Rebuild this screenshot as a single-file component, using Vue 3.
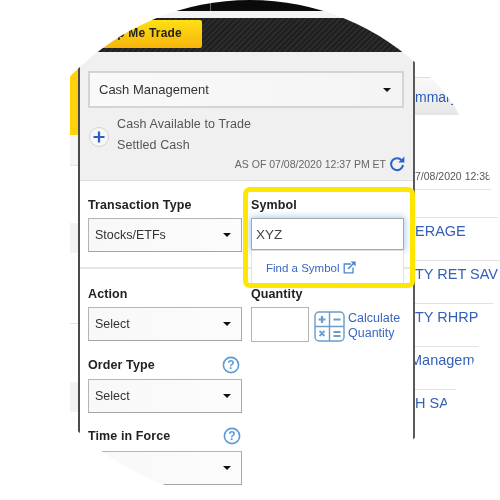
<script setup>
const leftRows = [
  { id: 1, cls: 'yellow' },
  { id: 2, cls: 'pale' },
  { id: 3, cls: 'band-a' },
  { id: 4, cls: 'rule' },
  { id: 5, cls: 'band-b' }
]

const accounts = [
  { id: 1, text: 'ERAGE', cls: 'row-a', width: '85px' },
  { id: 2, text: 'TY RET SAV', cls: 'row-b', width: '85px' },
  { id: 3, text: 'TY RHRP', cls: 'row-c', width: '78px' },
  { id: 4, text: 'Managem', cls: 'row-d', width: '64px' },
  { id: 5, text: 'H SA', cls: 'row-e', width: '41px' }
]
</script>

<template>
  <div class="stage">
    <header class="topbar">
      <div class="black"><span class="tick"></span></div>
      <div class="tabbar">
        <div class="tab">Help Me Trade</div>
      </div>
    </header>

    <div class="body">
      <aside class="left">
        <div v-for="row in leftRows" :key="row.id" :class="row.cls"></div>
      </aside>

      <main class="panel">
        <section class="cash">
          <div class="select cash-select">
            <span>Cash Management</span>
            <i class="caret"></i>
          </div>
          <div class="balances">
            <span class="plus">
              <svg width="14" height="14" viewBox="0 0 14 14">
                <path d="M7 1.5v11M1.5 7h11" stroke="#2a5fc4" stroke-width="2.2" fill="none" />
              </svg>
            </span>
            <div class="balance-text">
              <div>Cash Available to Trade</div>
              <div>Settled Cash</div>
            </div>
          </div>
          <div class="asof">
            <span>AS OF 07/08/2020 12:37 PM ET</span>
            <svg width="16" height="17" viewBox="0 0 16 17">
              <path d="M12.6 5.2A6 6 0 1 0 14 10" stroke="#2a62c8" stroke-width="2" fill="none" />
              <path d="M15.4 1.4v6h-6z" fill="#2a62c8" />
            </svg>
          </div>
        </section>

        <section class="form-row first">
          <div class="col">
            <label>Transaction Type</label>
            <div class="select">
              <span>Stocks/ETFs</span>
              <i class="caret"></i>
            </div>
          </div>
          <div class="col symbol">
            <label>Symbol</label>
            <div class="symbol-input">XYZ</div>
            <div class="symbol-menu">
              <a>Find a Symbol</a>
              <svg width="13" height="13" viewBox="0 0 13 13">
                <path d="M8 3H1.2v8.8H10V6.500" stroke="#4a86c8" stroke-width="1.3" fill="none" />
                <path d="M5 8l6-6" stroke="#4a86c8" stroke-width="1.5" fill="none" />
                <path d="M7.600 .6h5v5z" fill="#4a86c8" />
              </svg>
            </div>
          </div>
        </section>

        <section class="form-row second">
          <div class="col">
            <label>Action</label>
            <div class="select">
              <span>Select</span>
              <i class="caret"></i>
            </div>
            <label class="with-help">
              Order Type
              <svg class="help" width="18" height="18" viewBox="0 0 18 18">
                <circle cx="9" cy="9" r="7.600" stroke="#5c9bd6" stroke-width="1.6" fill="#fff" />
                <text x="9" y="13" text-anchor="middle" class="help-mark">?</text>
              </svg>
            </label>
            <div class="select">
              <span>Select</span>
              <i class="caret"></i>
            </div>
            <label class="with-help tif">
              Time in Force
              <svg class="help" width="18" height="18" viewBox="0 0 18 18">
                <circle cx="9" cy="9" r="7.600" stroke="#5c9bd6" stroke-width="1.6" fill="#fff" />
                <text x="9" y="13" text-anchor="middle" class="help-mark">?</text>
              </svg>
            </label>
            <div class="select">
              <span></span>
              <i class="caret"></i>
            </div>
          </div>
          <div class="col">
            <label>Quantity</label>
            <div class="qty">
              <div class="qty-input"></div>
              <svg width="31" height="31" viewBox="0 0 31 31">
                <rect x="1" y="1" width="29" height="29" rx="4" stroke="#6c9cc8" stroke-width="1.4" fill="#fff" />
                <path d="M15.500 1v29M1 15.500h29" stroke="#6c9cc8" stroke-width="1.4" />
                <path d="M8 5v7M4.500 8.500h7M19.500 8.500h7" stroke="#6c9cc8" stroke-width="2.200" />
                <path d="M5.500 20l5 5M10.500 20l-5 5M19.500 21h7M19.500 25h7" stroke="#6c9cc8" stroke-width="1.800" />
              </svg>
              <a class="calc">Calculate<br />Quantity</a>
            </div>
          </div>
        </section>
      </main>

      <aside class="right">
        <div class="summary-tab"><span>mmary</span></div>
        <div class="date">7/08/2020 12:38</div>
        <div
          v-for="item in accounts"
          :key="item.id"
          class="account"
          :class="item.cls"
          :style="{ width: item.width }"
        >
          <span>{{ item.text }}</span>
        </div>
      </aside>
    </div>

    <div class="highlight"></div>
  </div>
</template>

<style scoped>
.stage {
  position: relative;
  width: 500px;
  height: 500px;
  overflow: hidden;
  background: #fff;
  clip-path: circle(250px at 250px 250px);
  font-family: "Liberation Sans", Arial, sans-serif;
  color: #333;
  filter: blur(0.35px);
}

/* top of the page */
.topbar {
  height: 52px;
  background: #f4f4f4;
}

.black {
  position: relative;
  height: 11px;
  background: #0b0b0b;
}

.tick {
  position: absolute;
  left: 210px;
  top: 0;
  width: 1px;
  height: 11px;
  background: #666;
}

.tabbar {
  height: 34px;
  margin-top: 7px;
  padding-top: 2px;
  box-sizing: border-box;
  background: repeating-linear-gradient(135deg, #2b2b2b 0 2px, #1f1f1f 2px 4px);
}

.tab {
  width: 202px;
  height: 28px;
  box-sizing: border-box;
  padding-left: 98px;
  border-radius: 0 2px 2px 0;
  background: linear-gradient(#ffe014, #f6b40c);
  color: #222;
  font-size: 12px;
  font-weight: 700;
  line-height: 26px;
  letter-spacing: 0.2px;
}

.body {
  display: flex;
  height: 448px;
}

/* strip left of the panel */
.left {
  width: 8px;
  margin-left: 70px;
  flex: none;
}

.yellow {
  height: 83px;
  background: #ffd20a;
}

.pale {
  height: 30px;
  background: #f5f5f5;
  border-bottom: 1px solid #e4e4e4;
}

.band-a {
  height: 30px;
  margin-top: 57px;
  background: #f3f3f3;
}

.rule {
  height: 1px;
  margin-top: 70px;
  background: #e4e4e4;
}

.band-b {
  height: 30px;
  margin-top: 58px;
  background: #f3f3f3;
}

/* order panel */
.panel {
  width: 337px;
  flex: none;
  box-sizing: border-box;
  border-left: 2px solid #4a4a4a;
  border-right: 2px solid #5a5a5a;
  background: #fff;
}

.cash {
  height: 129px;
  box-sizing: border-box;
  padding: 19px 9px 0 8px;
  background: #f0f0f0;
  border-bottom: 1px solid #dedede;
}

.select {
  display: flex;
  align-items: center;
  justify-content: space-between;
  height: 34px;
  box-sizing: border-box;
  padding: 0 10px 0 6px;
  border: 1px solid #aaa;
  border-color: #b4b4b4 #aaa #a4a4a4 #b4b4b4;
  background: linear-gradient(90deg, #f8f8f8, #fcfcfc);
  font-size: 12.5px;
  color: #333;
}

.cash-select {
  height: 37px;
  padding-left: 9px;
  padding-right: 11px;
  border: 2px solid #d4d4d4;
  background: linear-gradient(90deg, #f9f9f9, #f4f4f4);
  font-size: 13px;
}

.caret {
  width: 0;
  height: 0;
  border-left: 4px solid transparent;
  border-right: 4px solid transparent;
  border-top: 4px solid #111;
}

.balances {
  display: flex;
  align-items: center;
  height: 42px;
  margin-top: 6px;
}

.plus {
  display: flex;
  align-items: center;
  justify-content: center;
  width: 20px;
  height: 20px;
  margin-top: 3px;
  margin-left: 1px;
  border: 1px solid #d4d4d4;
  border-radius: 50%;
  background: #f7f7f7;
  box-sizing: border-box;
}

.balance-text {
  margin-left: 8px;
  font-size: 12.5px;
  line-height: 21px;
  color: #555;
  letter-spacing: 0.1px;
}

.asof {
  display: flex;
  justify-content: flex-end;
  align-items: center;
  gap: 3px;
  height: 17px;
  margin-top: -1px;
  margin-right: -1px;
  font-size: 10.5px;
  color: #666;
}

.form-row {
  display: grid;
  grid-template-columns: 154px 153px;
  gap: 9px;
  padding-left: 8px;
}

.form-row.first {
  height: 88px;
  box-sizing: border-box;
  padding-top: 16px;
  border-bottom: 2px solid #e6e6e6;
}

.form-row.second {
  padding-top: 17px;
}

.col {
  position: relative;
}

label {
  display: flex;
  align-items: center;
  justify-content: space-between;
  height: 15px;
  margin-bottom: 6px;
  font-size: 12.5px;
  font-weight: 700;
  color: #222;
  letter-spacing: 0.1px;
}

.with-help {
  height: 18px;
  margin-top: 15px;
  margin-bottom: 5px;
  padding-right: 2px;
}

.tif {
  margin-top: 14px;
  margin-bottom: 6px;
  padding-right: 1px;
}

.help-mark {
  font-family: "Liberation Sans", Arial, sans-serif;
  font-size: 12px;
  font-weight: 700;
  fill: #5c9bd6;
}

.symbol-input {
  height: 32px;
  box-sizing: border-box;
  padding-left: 4px;
  border: 1px solid #a8a8a8;
  background: #fff;
  box-shadow: 0 0 7px 1px rgba(90, 160, 235, 0.55);
  font-size: 13.5px;
  line-height: 32px;
  color: #444;
}

.symbol-menu {
  position: absolute;
  left: 0;
  top: 53px;
  z-index: 1;
  display: flex;
  align-items: center;
  gap: 3px;
  width: 153px;
  height: 37px;
  box-sizing: border-box;
  padding: 0 0 3px 14px;
  background: #fff;
  border: 1px solid #e2e2e2;
  border-top: 1px solid #ddd;
  border-bottom: 0;
  font-size: 11.5px;
  color: #3a66c0;
}

.qty {
  display: flex;
  align-items: flex-start;
  gap: 5px;
}

.qty-input {
  width: 58px;
  height: 35px;
  box-sizing: border-box;
  border: 1px solid #b4b4b4;
  background: #fff;
}

.qty svg {
  margin-top: 4px;
  flex: none;
}

.calc {
  margin-left: -2px;
  margin-top: 4px;
  font-size: 12.5px;
  line-height: 15px;
  color: #3a66c0;
}

/* accounts table behind the panel */
.right {
  flex: 1;
  min-width: 0;
  overflow: hidden;
}

.summary-tab {
  width: 44px;
  height: 38px;
  margin-top: 25px;
  overflow: hidden;
  background: linear-gradient(#fafafa, #e6e6e6);
  clip-path: polygon(0 0, 60% 0, 100% 100%, 0 100%);
  border-top: 1px solid #ddd;
  box-sizing: border-box;
  font-size: 14px;
  line-height: 38px;
  color: #2f5bb7;
  white-space: nowrap;
}

.date {
  height: 25px;
  margin-top: 49px;
  width: 76px;
  overflow: hidden;
  border-bottom: 1px solid #e4e4e4;
  font-size: 10.5px;
  line-height: 24px;
  color: #555;
  white-space: nowrap;
}

.account {
  height: 42px;
  overflow: hidden;
  border-top: 1px solid #e2e2e2;
  font-size: 14.5px;
  line-height: 27px;
  color: #3560b8;
  white-space: nowrap;
}

.account span {
  display: block;
}

.row-a {
  margin-top: 27px;
}

.row-d span {
  margin-left: -5px;
}

.highlight {
  position: absolute;
  left: 243px;
  top: 187px;
  width: 172px;
  height: 101px;
  box-sizing: border-box;
  border: 5px solid #ffe600;
  border-radius: 7px;
  z-index: 2;
}
</style>
